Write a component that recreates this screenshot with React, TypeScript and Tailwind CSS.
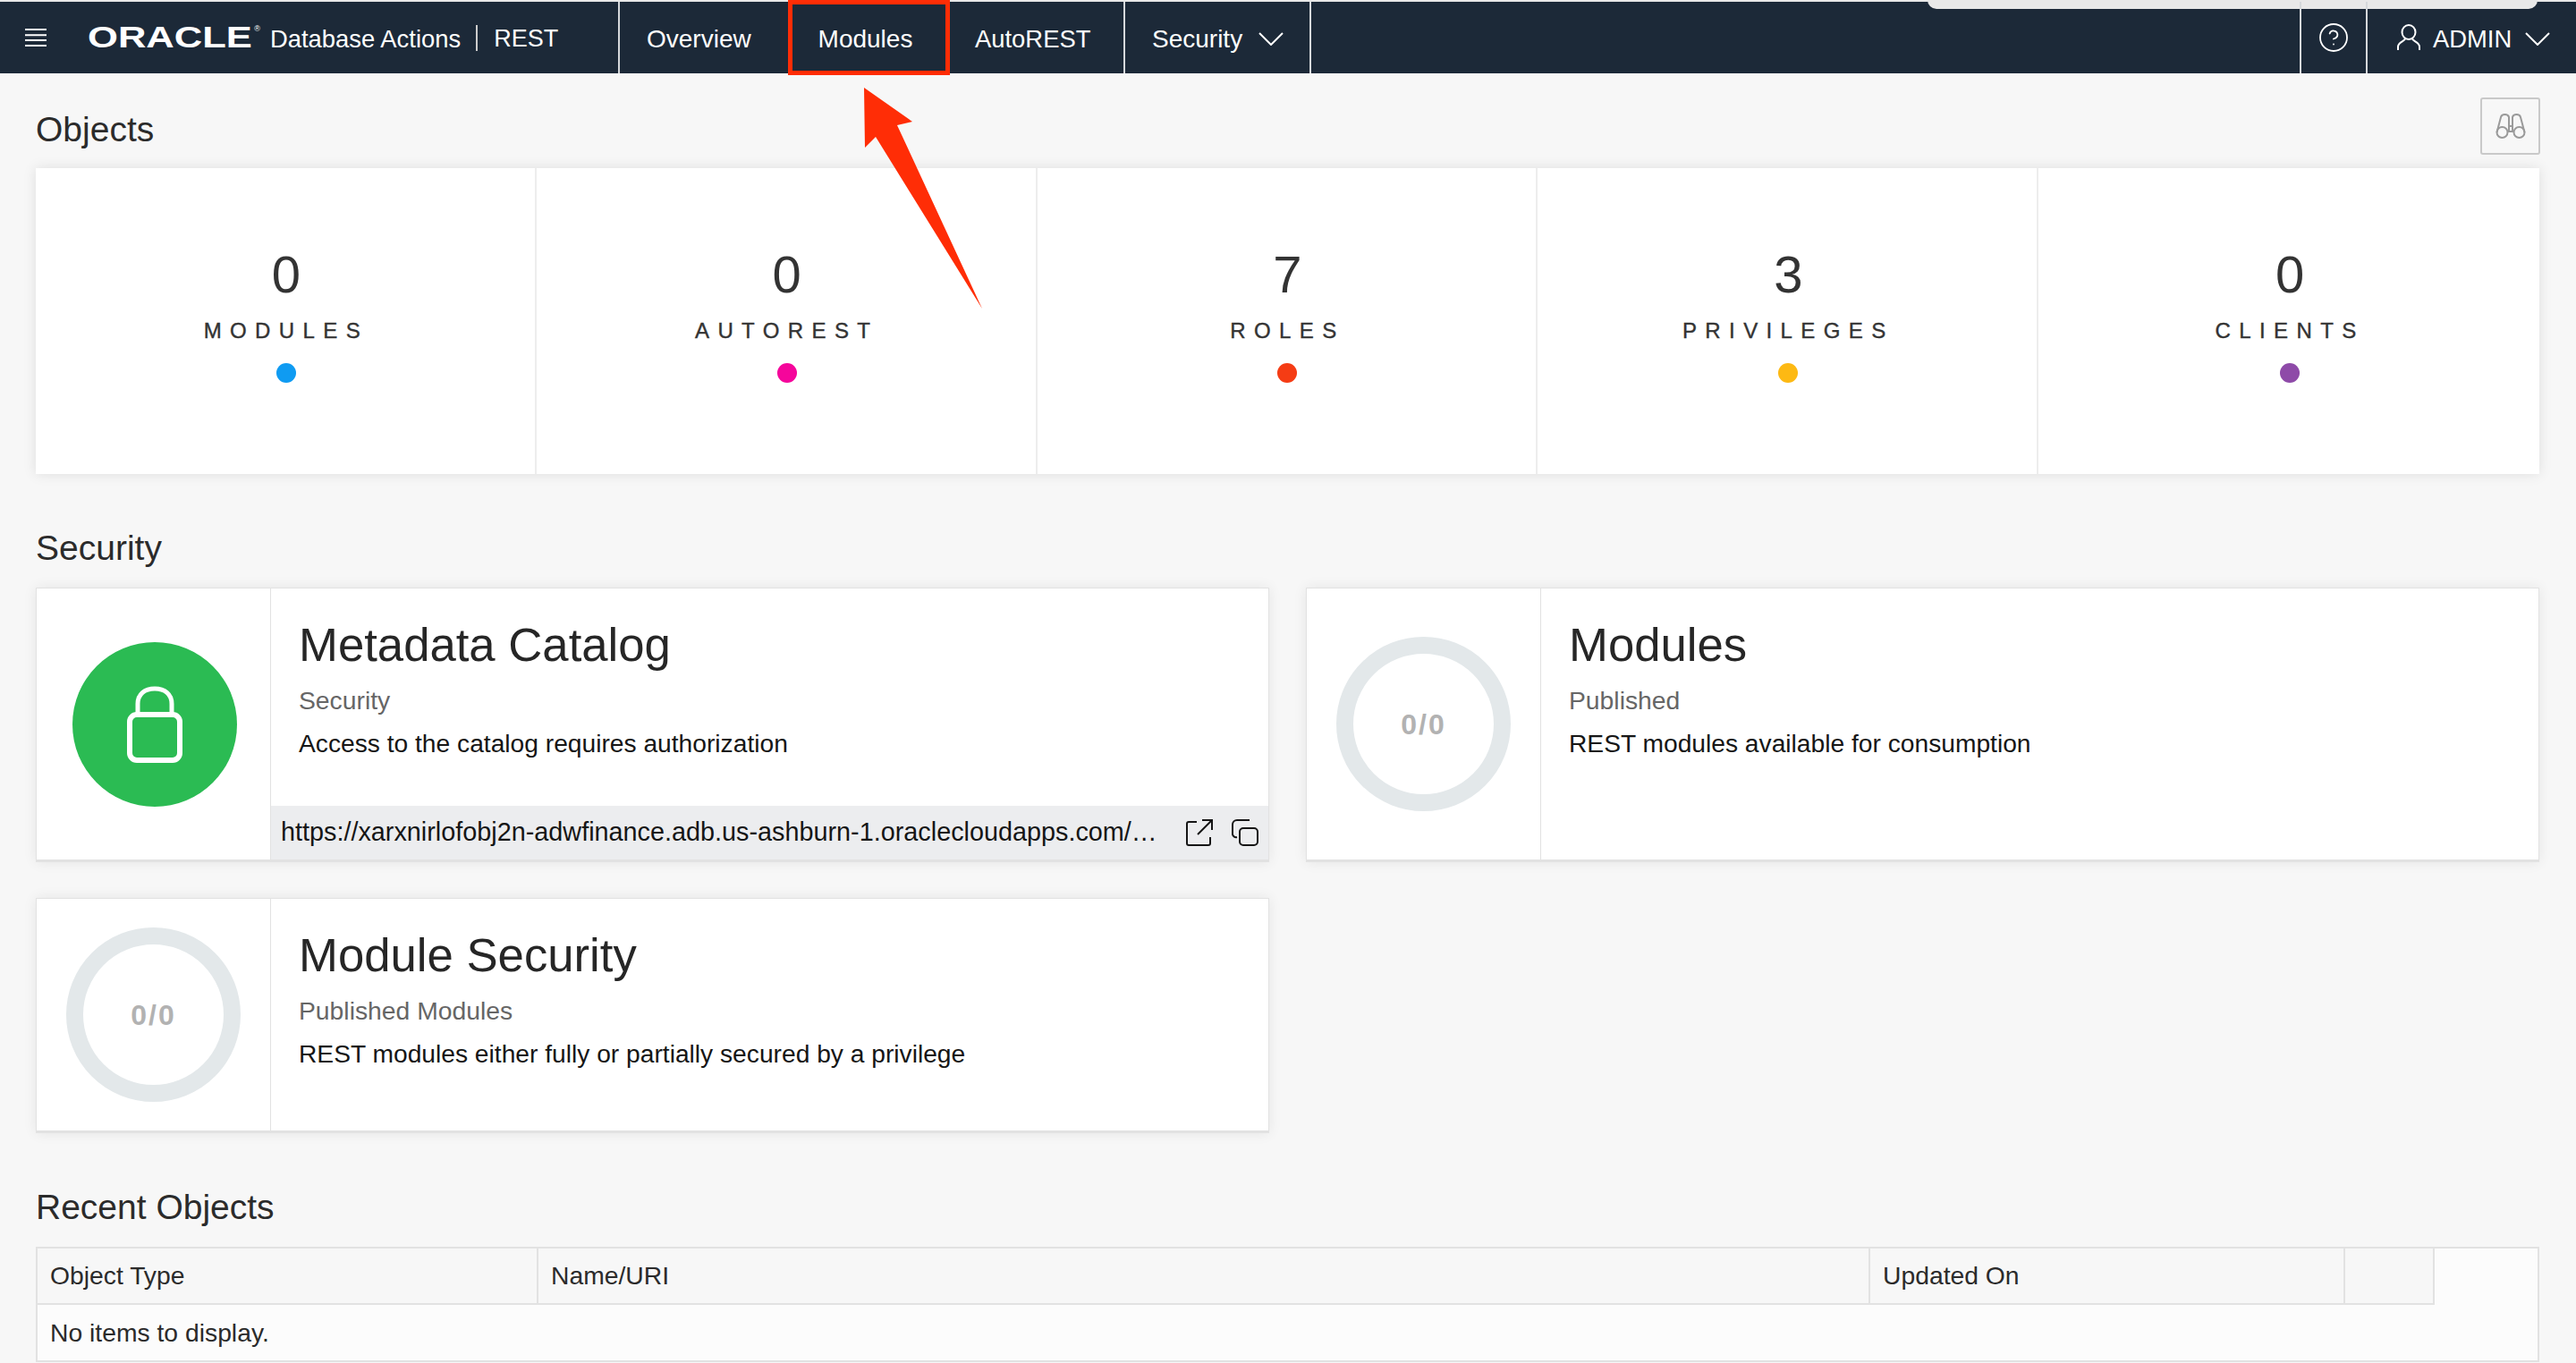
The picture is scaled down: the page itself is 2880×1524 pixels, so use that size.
import { CircleHelp } from "lucide-react"

const stats = [
  { count: "0", label: "MODULES", dot: "bg-[#0f9bf2]" },
  { count: "0", label: "AUTOREST", dot: "bg-[#f5069b]" },
  { count: "7", label: "ROLES", dot: "bg-[#f53c14]" },
  { count: "3", label: "PRIVILEGES", dot: "bg-[#fdb913]" },
  { count: "0", label: "CLIENTS", dot: "bg-[#8e4aa8]" },
]

const Chevron = () => (
  <svg className="shrink-0" width="28" height="15" viewBox="0 0 28 15" fill="none" stroke="#fff" strokeWidth="2">
    <path d="M1 1l13 13L27 1" />
  </svg>
)

const Ring = () => (
  <div className="w-[195px] h-[195px] rounded-full border-[19px] border-[#e3e8ea] flex items-center justify-center">
    <span className="text-[32px] tracking-[2px] font-bold text-[#b2b2b2]">0/0</span>
  </div>
)

const LockBadge = () => (
  <div className="ml-[2px] w-[184px] h-[184px] rounded-full bg-[#2bbb53] flex items-center justify-center">
    <svg width="62" height="86" viewBox="0 0 62 86" fill="none" stroke="#fff">
      <path d="M12 32V20C12 9 20 3 31 3s19 6 19 17v12" strokeWidth="5" />
      <rect x="3" y="32" width="56" height="51" rx="8" strokeWidth="6" />
    </svg>
  </div>
)

const InfoCard = ({
  title,
  subtitle,
  desc,
  badge,
  url,
}: {
  title: string
  subtitle: string
  desc: string
  badge: React.ReactNode
  url?: string
}) => (
  <div className="flex bg-white border border-[#e2e2e2] border-b-[3px] shadow-[0_0_14px_rgba(0,0,0,0.08)]">
    <div className="w-[262px] shrink-0 flex items-center justify-center border-r border-[#e2e2e2]">
      {badge}
    </div>
    <div className="flex-1 min-w-0 flex flex-col">
      <div className="flex-1 pl-[31px] pt-[32px]">
        <h3 className="text-[52.700px] leading-[62px] text-[#262626]">{title}</h3>
        <p className="mt-[13px] text-[28.300px] leading-[36px] text-[#666]">{subtitle}</p>
        <p className="mt-[12px] text-[28.200px] leading-[36px] text-[#161616]">{desc}</p>
      </div>
      {url && (
        <div className="h-[60px] bg-[#ecedef] flex items-center pl-[11px] pr-[12px]">
          <span className="w-[979px] whitespace-nowrap text-[28.800px] text-[#161616]">{url}</span>
          <svg className="ml-[33px] shrink-0" width="30" height="30" viewBox="0 0 30 30" fill="none" stroke="#161616" strokeWidth="2">
            <path d="M12 3H3a2 2 0 0 0-2 2v22a2 2 0 0 0 2 2h22a2 2 0 0 0 2-2v-7M13 17 28 2M18 1h11v11" />
          </svg>
          <svg className="ml-[21px] shrink-0" width="30" height="30" viewBox="0 0 30 30" fill="none" stroke="#161616" strokeWidth="2">
            <path d="M20 1H6a5 5 0 0 0-5 5v11a4 4 0 0 0 5 3" />
            <rect x="9" y="10" width="20" height="19" rx="4" />
          </svg>
        </div>
      )}
    </div>
  </div>
)

const NavItem = ({ children, className = "" }: { children: React.ReactNode; className?: string }) => (
  <div className={`h-full flex items-center text-[28px] text-white ${className}`}>{children}</div>
)

const App = () => {
  return (
    <div className="relative w-[2880px] h-[1524px] overflow-hidden bg-[#f7f7f7] font-['Liberation_Sans',sans-serif]">
      {/* HEADER */}
      <div className="h-[2px] bg-[#e8e8e8]" />
      <header className="relative h-[80px] bg-[#1c2938] flex items-center">
        <div className="absolute left-[2155px] top-[-2px] w-[682px] h-[10px] rounded-b-[10px] bg-[#e8e8e8]" />
        <svg className="ml-[28px] shrink-0" width="24" height="20" viewBox="0 0 24 20" stroke="#fff" strokeWidth="2">
          <path d="M0 1h24M0 7.300h24M0 13h24M0 19h24" />
        </svg>
        <div className="ml-[46px] w-[184px] h-[30px] shrink-0 relative">
          <span className="block origin-left scale-x-[1.32] text-[33px] leading-[30px] font-bold text-white">ORACLE</span>
          <span className="absolute right-[-9px] top-[-1px] text-[9px] text-white">®</span>
        </div>
        <span className="ml-[20px] pt-[3px] text-[27.400px] text-white whitespace-nowrap">Database Actions</span>
        <span className="ml-[17px] w-[2px] h-[29px] bg-[#ccc]" />
        <span className="ml-[18px] pt-[3px] text-[27px] text-white">REST</span>

        <NavItem className="absolute left-[691px] top-0 w-[190px] pl-[30px] pt-[3px] border-l-2 border-[#d5d8db]">Overview</NavItem>
        <NavItem className="absolute left-[881px] top-[-2px] !h-[84px] w-[181px] pt-[3px] pr-[8px] justify-center border-[5px] border-[#ff2d06]">Modules</NavItem>
        <NavItem className="absolute left-[1062px] top-0 w-[194px] pl-[28px] pt-[3px] !text-[27.400px]">AutoREST</NavItem>
        <NavItem className="absolute left-[1256px] top-0 w-[210px] pl-[30px] pt-[3px] border-x-2 border-[#d5d8db]">
          Security
          <span className="ml-[18px]">
            <Chevron />
          </span>
        </NavItem>

        <div className="absolute left-[2571px] top-0 h-full w-[74px] flex items-center justify-center border-l-2 border-[#d5d8db]">
          <CircleHelp className="w-[36px] h-[36px] text-white" strokeWidth={1.2} />
        </div>
        <NavItem className="absolute left-[2645px] top-0 pl-[33px] pt-[3px] !text-[27.400px] border-l-2 border-[#d5d8db]">
          <svg className="mt-[-3px]" width="26" height="30" viewBox="0 0 26 30" fill="none" stroke="#fff" strokeWidth="2">
            <ellipse cx="13" cy="9" rx="7.500" ry="8" />
            <path d="M9 16c0 3-8 4-8 9v4M17 16c0 3 8 4 8 9v4" />
          </svg>
          <span className="ml-[14px]">ADMIN</span>
          <span className="ml-[15px]">
            <Chevron />
          </span>
        </NavItem>
      </header>

      {/* OBJECTS */}
      <main className="pl-[40px] pr-[41px]">
        <div className="h-[106px] flex items-start justify-between">
          <h2 className="mt-[40px] text-[39px] leading-[46px] text-[#2b2b2b]">Objects</h2>
          <button className="mt-[27px] mr-[-1px] w-[67px] h-[64px] rounded-[3px] border-2 border-[#c9c9c9] flex items-center justify-center">
            <svg width="34" height="30" viewBox="0 0 34 30" fill="none" stroke="#9a9a9a" strokeWidth="2">
              <circle cx="7.500" cy="22" r="6" />
              <circle cx="26.500" cy="22" r="6" />
              <path d="M1.500 22 6 5c1-4 8-4 9 0v17M32.500 22 28 5c-1-4-8-4-9 0v17M15 15h4v6h-4" />
            </svg>
          </button>
        </div>

        <section className="h-[342px] grid grid-cols-5 bg-white shadow-[0_0_14px_rgba(0,0,0,0.1)]">
          {stats.map((s, i) => (
            <div key={s.label} className={`flex flex-col items-center pt-[89px] pl-[2px] ${i < 4 ? "border-r-2 border-[#ededed]" : ""}`}>
              <span className="text-[58px] leading-[60px] text-[#333]">{s.count}</span>
              <span className="mt-[18px] text-[24px] leading-[30px] tracking-[9.400px] [-webkit-text-stroke:0.4px_#333] text-[#333]">{s.label}</span>
              <span className={`mt-[21px] w-[22px] h-[22px] rounded-full ${s.dot}`} />
            </div>
          ))}
        </section>

        {/* SECURITY */}
        <h2 className="mt-[60px] text-[39px] leading-[46px] text-[#2b2b2b]">Security</h2>
        <section className="mt-[21px] grid grid-cols-2 gap-x-[41px] gap-y-[40px] grid-rows-[307px_263px]">
          <InfoCard
            title="Metadata Catalog"
            subtitle="Security"
            desc="Access to the catalog requires authorization"
            badge={<LockBadge />}
            url="https://xarxnirlofobj2n-adwfinance.adb.us-ashburn-1.oraclecloudapps.com/…"
          />
          <InfoCard
            title="Modules"
            subtitle="Published"
            desc="REST modules available for consumption"
            badge={<Ring />}
          />
          <InfoCard
            title="Module Security"
            subtitle="Published Modules"
            desc="REST modules either fully or partially secured by a privilege"
            badge={<Ring />}
          />
        </section>

        {/* RECENT OBJECTS */}
        <h2 className="mt-[60px] text-[39px] leading-[46px] text-[#2b2b2b]">Recent Objects</h2>
        <section className="mt-[21px] h-[129px] bg-[#fcfcfc] border-2 border-[#e2e2e2]">
          <div className="w-[2680px] h-[63px] flex border-b-2 border-r-2 border-[#e2e2e2] bg-[#f7f7f7] text-[28.300px] text-[#2b2b2b]">
            <div className="w-[560px] pl-[14px] flex items-center border-r-2 border-[#e2e2e2]">Object Type</div>
            <div className="w-[1489px] pl-[14px] flex items-center border-r-2 border-[#e2e2e2]">Name/URI</div>
            <div className="w-[531px] pl-[14px] flex items-center border-r-2 border-[#e2e2e2]">Updated On</div>
            <div className="flex-1" />
          </div>
          <div className="pl-[14px] h-[62px] flex items-center text-[28.300px] text-[#2b2b2b]">No items to display.</div>
        </section>
      </main>

      {/* annotation arrow */}
      <svg className="absolute left-[960px] top-[92px]" width="145" height="260" viewBox="960 92 145 260" fill="#ff2d06">
        <path d="M966 98 1020 136 1003 140 1098 345 979 153 967 165Z" />
      </svg>
    </div>
  )
}

export default App
